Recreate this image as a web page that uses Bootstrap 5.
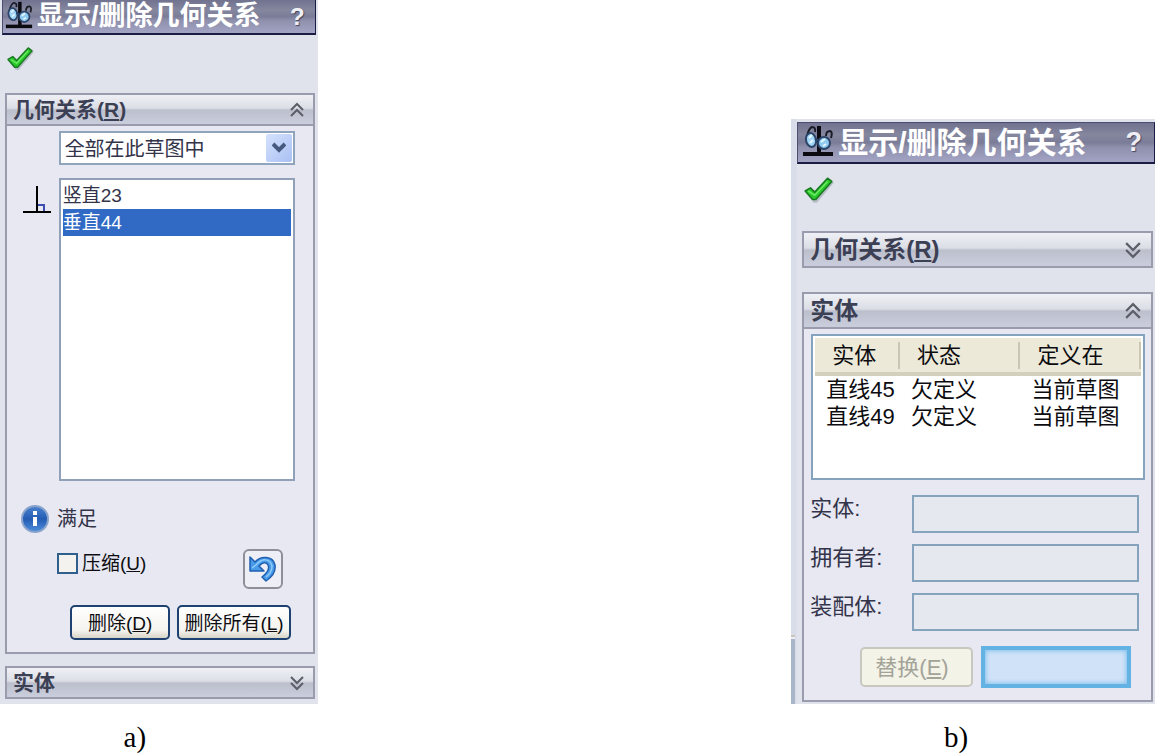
<!DOCTYPE html>
<html lang="zh-CN">
<head>
<meta charset="utf-8">
<meta name="viewport" content="width=device-width, initial-scale=1">
<title>显示/删除几何关系</title>
<link href="https://cdn.jsdelivr.net/npm/bootstrap@5.3.0/dist/css/bootstrap.min.css" rel="stylesheet">
<style>
  body { font-family: "Liberation Sans", "Noto Sans CJK SC", sans-serif; background: #fff; color: #33344a; }
  .panel-a { width: 27.5%; font-size: 19px; }
  .panel-b { width: 31.5%; font-size: 22px; }
  .pm { background: #e0e2ec; padding-bottom: 5px; }
  .panel-b .pm {
    padding: 3px 0 2px 6px;
    background: linear-gradient(#c9c7bd 2px, #eceef4 2px, #eceef4 4px, #a9b5c8 4px) left bottom / 4px 69px no-repeat, linear-gradient(90deg, #d9dce9 5px, #e0e2ec 6px);
  }
  .titlebar {
    background: linear-gradient(#70728f, #85879f 30%, #7b7d98 50%, #8f90ac 62%, #a3a3c4);
    border: 1px solid #4c4e70; border-bottom: 2px solid #1b1c44; border-right-color: #1b1c44;
    color: #fff; line-height: 1; font-weight: 700; white-space: nowrap;
  }
  .panel-a .titlebar { height: 35px; margin: 0 2px; font-size: 27px; border-top: 0; padding: 0 10px 0 2px; }
  .panel-b .titlebar { height: 42px; font-size: 30px; padding: 0 12px 0 4px; }
  .titlebar svg { margin-bottom: 4px; }
  .titlebar button { color: #f0f0f4; font: 700 24px "Liberation Sans", sans-serif; text-shadow: 1px 1px 1px #444660; line-height: 1; }
  .panel-b .titlebar button { font-size: 27px; }
  .okbar { height: 58px; padding: 11px 0 0 6px; }
  .panel-b .okbar { height: 67px; padding: 12px 0 0 6px; }
  .sect { border: 2px solid #9a9bad; background: #e7e8f1; margin: 0 3px 0 5px; }
  .panel-b .sect { margin-right: 2px; }
  .panel-a .sect-open { margin-bottom: 12px; padding-bottom: 12px; }
  .panel-b .sect-open { padding-bottom: 12px; }
  .sect-head {
    width: 100%; border: 0; padding: 0 9px 0 6px; height: 29px; color: #3c4054; font-weight: 700; font-size: 21px; line-height: 1;
    background: linear-gradient(#eef0f5, #dcdee6 45%, #bcc0cd 52%, #c9ccda 95%);
  }
  .panel-b .sect-head { height: 33px; font-size: 24px; padding-right: 10px; }
  .sect-head.open-head { border-bottom: 2px solid #9a9bad; height: 31px; }
  .panel-b .sect-head.open-head { height: 35px; }
  .filter { padding-right: 18px; }
  .pick { width: 236px; max-width: 100%; margin: 5px 0 13px; }
  .pick .form-select { height: 34px; font-size: 20px; line-height: 1; padding: 2px 30px 0 4px; border: 2px solid #8fa5bd; border-radius: 0; background: #fff; color: #33344a; }
  .arrow { right: 3px; top: 3px; width: 26px; height: 28px; background: linear-gradient(135deg, #d5e2fd, #a9c0f3); pointer-events: none; border-radius: 2px; }
  .rel-list { width: 236px; height: 303px; border: 2px solid #8fa0b8; background: #fff; border-radius: 0; padding: 2px; }
  .rel-list .list-group-item { border: 0; padding: 0; height: 27px; line-height: 27px; color: #33344a; }
  .rel-list .list-group-item.active { background: #316ac5; color: #fff; margin: 0; }
  .status { font-size: 20px; line-height: 28px; padding-left: 14px; }
  .opts { padding: 0 30px 0 50px; }
  .form-check-input[type=checkbox].tick { width: 21px; height: 21px; margin: 0; border: 2px solid #2f5f8c; border-radius: 0; background-color: #f3f2ee; }
  .form-check-label, .xp { color: #0d0d12; line-height: 1; }
  .acts { padding-right: 22px; gap: 7px; }
  .xp { height: 35px; border: 2px solid #1d4170; border-radius: 5px; background: linear-gradient(#fff, #f4f3ee 75%, #d8d5c8); font-size: 19px; padding: 2px 5px 0; white-space: nowrap; }
  .undo { width: 40px; height: 40px; border: 2px solid #8e8f98; border-radius: 6px; background: #edeef6; }
  .ents { height: 146px; border: 2px solid #86a3bd; background: #fff; padding: 2px; margin: 5px 6px 0 7px; }
  .ents table { color: #0c0c10; table-layout: fixed; line-height: 27px; }
  .ents th { background: #ece9d8; font-weight: 400; height: 36px; padding: 0; border-bottom: 4px solid #d3d0be; line-height: 32px; }
  .ents th span { display: block; border-right: 2px solid #c9c6b4; height: 27px; line-height: 27px; padding-left: 17px; }
  .ents td { padding: 0 0 0 11px; white-space: nowrap; }
  .flds { margin: 15px 12px 0 6px; gap: 11px; }
  .fld { height: 38px; border: 2px solid #86a3bd; border-radius: 0; background: #e6e8f0; padding: 0 4px; }
  .fld:focus { background: #e6e8f0; }
  .lbl { width: 102px; line-height: 28px; }
  .panel-b .swap { height: 40px; width: 113px; font-size: 22px; color: #a3a398; border-color: #c9c8c0; background: #f3f3e8; opacity: 1; padding-right: 14px; }
  .wide { height: 42px; width: 150px; border: 4px solid #62b3e4; background: #cfe2f8; box-shadow: inset 0 0 4px 1px #83c0ec; }
  .cap { font: 29px/34px "Liberation Serif", serif; color: #000; height: 49px; padding: 16px 48px 0 0; }
  .panel-b .cap { padding-right: 34px; }
</style>
</head>
<body>
<svg class="d-none" aria-hidden="true">
  <symbol id="eye" viewBox="0 0 32 32">
    <path d="M15 1h4v27h-4z" fill="#0a0a10"/><path d="M1 27h30v4H1z" fill="#0a0a10"/>
    <path d="M5 11Q7 3 10 2Q14 2 13 7M24 11Q24 6 28 6Q31 7 29 13" fill="none" stroke="#1a1c28" stroke-width="2"/>
    <ellipse cx="9" cy="15" rx="5" ry="7" fill="#9fd4f6" stroke="#2b4468" stroke-width="2" transform="rotate(-12 9 15)"/>
    <ellipse cx="22" cy="18" rx="6" ry="6" fill="#8ecaf2" stroke="#2b4468" stroke-width="2"/>
    <path d="M7 13l3-3M8 18l3-3M19 17l4-3M21 21l3-2" stroke="#e6f7ff" stroke-width="2"/>
    <path d="M13 15q2-2 3 1" fill="none" stroke="#2b4468" stroke-width="2"/>
  </symbol>
  <symbol id="ok" viewBox="0 0 30 27">
    <path d="M4 17l5-3 3 4L25 4l4 2L13 25H10z" fill="#8d97a2" opacity=".5"/>
    <path d="M2 14l5-3 4 4L23 2l4 3L12 22H9z" fill="#27c92a" stroke="#1b7a22" stroke-width="1.5" stroke-linejoin="round"/>
    <path d="M5 14l6 4L23 5" fill="none" stroke="#6de864" stroke-width="1.5"/>
  </symbol>
  <symbol id="up" viewBox="0 0 14 16"><path d="M1 8l6-6 6 6M1 14l6-6 6 6" fill="none" stroke="#5c5e68" stroke-width="2"/></symbol>
  <symbol id="down" viewBox="0 0 14 16"><path d="M1 2l6 6 6-6M1 8l6 6 6-6" fill="none" stroke="#5c5e68" stroke-width="2"/></symbol>
</svg>

<main class="d-flex justify-content-between align-items-end">
  <section class="panel-a">
    <div class="pm">
      <header class="titlebar d-flex align-items-center">
        <svg width="28" height="28" class="me-1 flex-shrink-0"><use href="#eye"/></svg>
        <span>显示/删除几何关系</span>
        <button type="button" class="border-0 bg-transparent p-0 ms-auto" aria-label="帮助">?</button>
      </header>
      <div class="okbar"><button type="button" class="border-0 bg-transparent p-0 d-flex" aria-label="确定"><svg width="29" height="26"><use href="#ok"/></svg></button></div>

      <div class="sect sect-open">
        <button type="button" class="sect-head open-head d-flex align-items-center justify-content-between">
          <span>几何关系(<u>R</u>)</span><svg width="14" height="16"><use href="#up"/></svg>
        </button>
        <div class="filter d-flex flex-column align-items-end">
          <div class="pick position-relative">
            <select class="form-select" aria-label="过滤"><option>全部在此草图中</option></select>
            <span class="arrow position-absolute d-flex align-items-center justify-content-center"><svg width="14" height="12" viewBox="0 0 14 12"><path d="M1 2l6 6 6-6" fill="none" stroke="#465a80" stroke-width="4"/></svg></span>
          </div>
          <div class="d-flex">
            <svg width="28" height="30" class="mt-2 me-2" viewBox="0 0 28 30"><path d="M14 0v26M0 26h28" fill="none" stroke="#000" stroke-width="2"/><path d="M15 19h6v6" fill="none" stroke="#3c4fb0" stroke-width="2"/></svg>
            <div class="rel-list list-group">
              <button type="button" class="list-group-item list-group-item-action">竖直23</button>
              <button type="button" class="list-group-item list-group-item-action active">垂直44</button>
            </div>
          </div>
        </div>
        <div class="status d-flex align-items-center mt-4">
          <svg width="28" height="28" class="me-2" viewBox="0 0 28 28"><defs><linearGradient id="ib" x2="0" y2="1"><stop stop-color="#4b83cf"/><stop offset=".5" stop-color="#245cb4"/><stop offset="1" stop-color="#4f8fdc"/></linearGradient></defs><circle cx="14" cy="14" r="13" fill="url(#ib)" stroke="#8aa3cb" stroke-width="2"/><path d="M12 6h4v4h-4zM12 12h4v9h-4z" fill="#fff"/></svg>
          <span>满足</span>
        </div>
        <div class="opts d-flex justify-content-between align-items-start mt-3">
          <div class="d-flex align-items-center pt-1"><input class="form-check-input tick" type="checkbox" id="sup"><label class="form-check-label ms-1" for="sup">压缩(<u>U</u>)</label></div>
          <button type="button" class="undo p-0 d-flex align-items-center justify-content-center" aria-label="撤消"><svg width="30" height="30" viewBox="0 0 30 30"><path d="M2 3L7 8C12 2 25 1 27 11C28 18 24 23 18 27L14 23C19 19 22 15 20 11C18 7 14 9 11 12L16 17H2z" fill="#4a9be8" stroke="#1f5fb0" stroke-width="1.5" stroke-linejoin="round"/><path d="M4 14L8 11C14 4 22 4 24 12C24 17 22 20 18 23" fill="none" stroke="#8fcbfa" stroke-width="1.5"/></svg></button>
        </div>
        <div class="acts d-flex justify-content-end mt-3">
          <button type="button" class="xp px-3">删除(<u>D</u>)</button>
          <button type="button" class="xp">删除所有(<u>L</u>)</button>
        </div>
      </div>

      <div class="sect">
        <button type="button" class="sect-head d-flex align-items-center justify-content-between"><span>实体</span><svg width="14" height="16"><use href="#down"/></svg></button>
      </div>
    </div>
    <div class="cap text-center">a)</div>
  </section>

  <section class="panel-b">
    <div class="pm">
      <header class="titlebar d-flex align-items-center">
        <svg width="32" height="32" class="me-1 flex-shrink-0"><use href="#eye"/></svg>
        <span>显示/删除几何关系</span>
        <button type="button" class="border-0 bg-transparent p-0 ms-auto" aria-label="帮助">?</button>
      </header>
      <div class="okbar"><button type="button" class="border-0 bg-transparent p-0 d-flex" aria-label="确定"><svg width="32" height="29"><use href="#ok"/></svg></button></div>

      <div class="sect mb-4">
        <button type="button" class="sect-head d-flex align-items-center justify-content-between"><span>几何关系(<u>R</u>)</span><svg width="16" height="20"><use href="#down"/></svg></button>
      </div>

      <div class="sect sect-open">
        <button type="button" class="sect-head open-head d-flex align-items-center justify-content-between"><span>实体</span><svg width="16" height="20"><use href="#up"/></svg></button>
        <div class="ents">
          <table class="w-100">
            <colgroup><col style="width:26%"><col style="width:37%"><col style="width:37%"></colgroup>
            <thead><tr><th><span>实体</span></th><th><span>状态</span></th><th><span>定义在</span></th></tr></thead>
            <tbody>
              <tr><td>直线45</td><td>欠定义</td><td>当前草图</td></tr>
              <tr><td>直线49</td><td>欠定义</td><td>当前草图</td></tr>
            </tbody>
          </table>
        </div>
        <form class="flds d-flex flex-column">
          <div class="d-flex"><label class="lbl flex-shrink-0" for="f1">实体:</label><input id="f1" class="form-control fld"></div>
          <div class="d-flex"><label class="lbl flex-shrink-0" for="f2">拥有者:</label><input id="f2" class="form-control fld"></div>
          <div class="d-flex"><label class="lbl flex-shrink-0" for="f3">装配体:</label><input id="f3" class="form-control fld"></div>
          <div class="d-flex justify-content-end align-items-center gap-2 me-2 mt-1">
            <button type="button" class="xp swap" disabled>替换(<u>E</u>)</button>
            <button type="button" class="wide" aria-label="应用"></button>
          </div>
        </form>
      </div>
    </div>
    <div class="cap text-center">b)</div>
  </section>
</main>
<script src="https://cdn.jsdelivr.net/npm/bootstrap@5.3.0/dist/js/bootstrap.bundle.min.js"></script>
</body>
</html>
